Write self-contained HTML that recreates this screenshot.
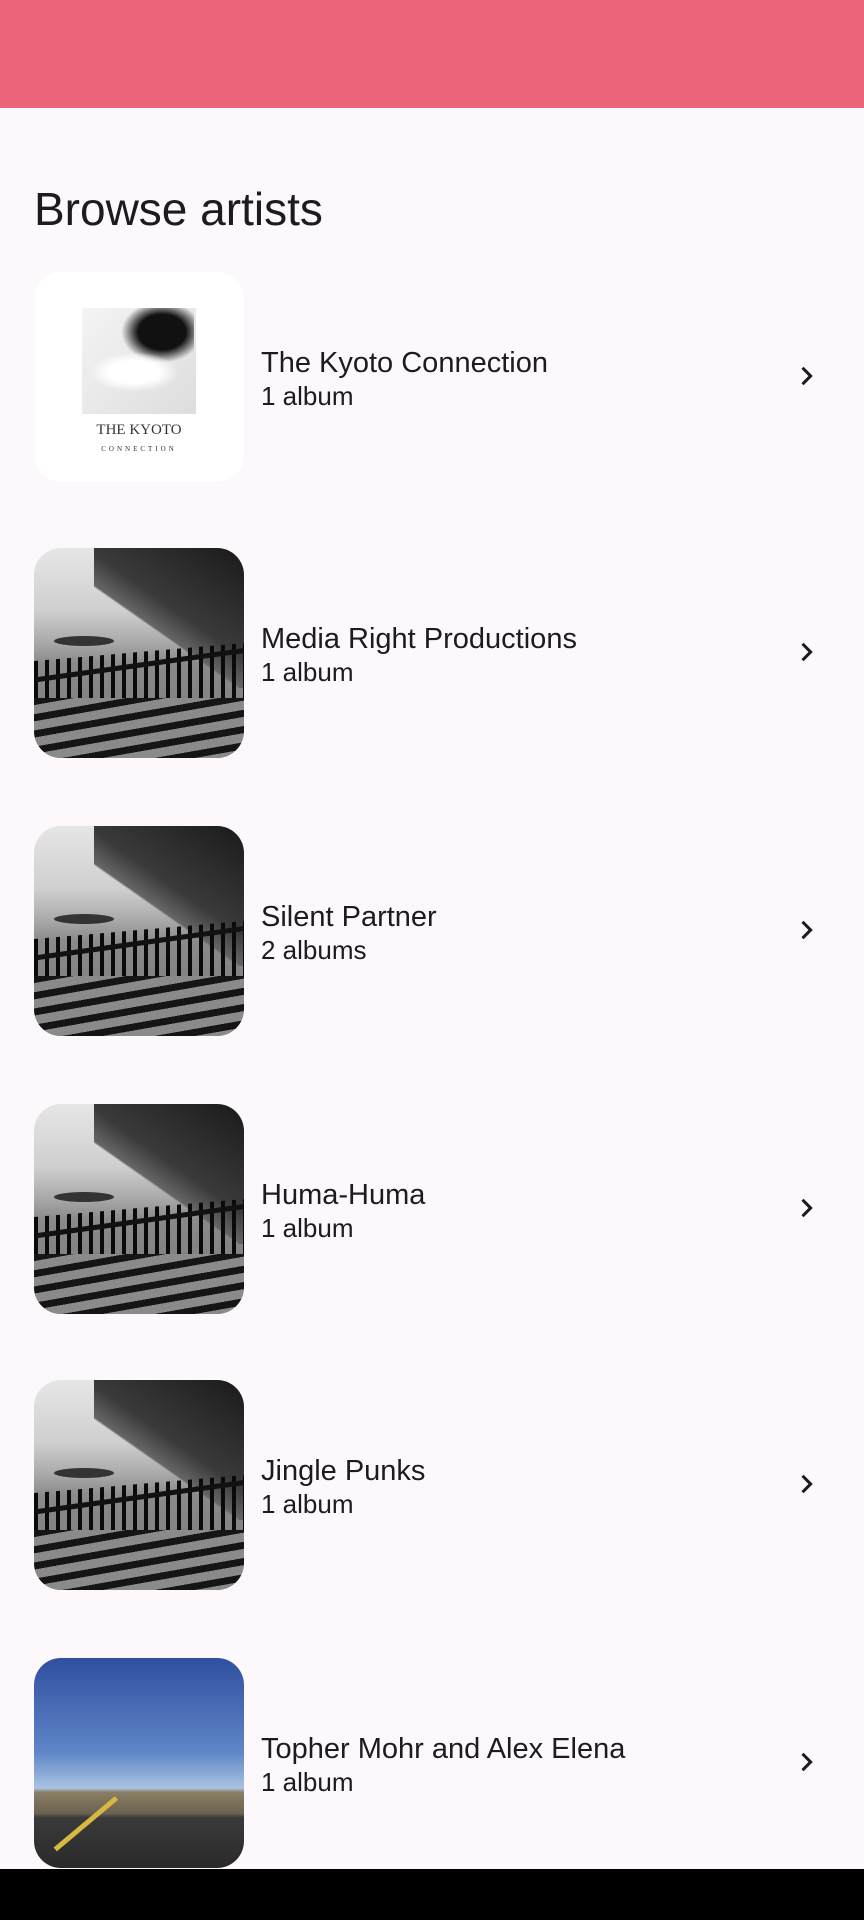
<!DOCTYPE html>
<html><head><meta charset="utf-8"><style>
*{margin:0;padding:0;box-sizing:border-box}
body{width:864px;height:1920px;background:#fdf8fc;font-family:"Liberation Sans",Roboto,sans-serif;position:relative;overflow:hidden;color:#1c1b1f}
.top{position:absolute;left:0;top:0;width:864px;height:108px;background:#ec6479}
h1{position:absolute;left:34px;top:182px;font-size:46px;font-weight:400;color:#1c1b1f}
.row{position:absolute;left:0;width:864px;height:210px}
.img{position:absolute;left:34px;top:0;width:210px;height:210px;border-radius:27px;overflow:hidden}
.coast{background:linear-gradient(180deg,#e6e6e6 0%,#cfcfcf 30%,#a9a9a9 45%,#8a8a8a 55%,#777 100%)}
.coast .hill{position:absolute;left:60px;top:0;width:150px;height:140px;background:linear-gradient(215deg,#1a1a1a 0%,#3a3a3a 45%,#666 58%,transparent 59%)}
.coast .rock{position:absolute;left:20px;top:88px;width:60px;height:10px;background:#333;border-radius:50%}
.coast .fence{position:absolute;left:0;top:95px;width:210px;height:60px;background:repeating-linear-gradient(90deg,#0a0a0a 0 4px,transparent 4px 11px);clip-path:polygon(0 30%,100% 0,100% 100%,0 100%)}
.coast .rail{position:absolute;left:0;top:100px;width:210px;height:5px;background:#111;transform:rotate(-8deg);transform-origin:right}
.coast .grnd{position:absolute;left:0;top:150px;width:210px;height:60px;background:repeating-linear-gradient(170deg,#151515 0 7px,#8a8a8a 7px 16px)}
.kyoto{background:#fff}
.kyoto .p{position:absolute;left:48px;top:36px;width:114px;height:106px;background:linear-gradient(135deg,#f4f4f4,#ddd)}
.kyoto .h{position:absolute;left:80px;top:36px;width:80px;height:60px;background:radial-gradient(ellipse at 60% 40%,#111 0 35%,transparent 60%)}
.kyoto .b{position:absolute;left:55px;top:80px;width:90px;height:40px;background:radial-gradient(ellipse,#fff 0 40%,transparent 70%)}
.kyoto .t{position:absolute;left:0;width:210px;top:150px;text-align:center;font-family:"Liberation Serif",serif;font-size:15px;color:#333}
.road{background:linear-gradient(180deg,#2f4fa0 0%,#5f86c8 45%,#a9c3e0 62%,#8a7e64 64%,#6b6250 74%,#3a3a3a 76%,#2a2a2a 100%)}
.road .y{position:absolute;left:80px;top:140px;width:5px;height:80px;background:#d8b840;transform:rotate(50deg);transform-origin:top}
.name{position:absolute;left:261px;top:75px;font-size:29px}
.sub{position:absolute;left:261px;top:109px;font-size:26px}
.chev{position:absolute;left:792px;top:90px}
.bot{position:absolute;left:0;top:1869px;width:864px;height:51px;background:#000}
</style></head><body>
<div class="top"></div>
<h1>Browse artists</h1>

<div class="row" style="top:272px"><div class="img kyoto"><div class="p"></div><div class="h"></div><div class="b"></div><div class="t">THE KYOTO<br><span style="font-size:7px;letter-spacing:3px">CONNECTION</span></div></div>
<div class="name">The Kyoto Connection</div><div class="sub">1 album</div>
<svg class="chev" width="28" height="28" viewBox="0 0 24 24"><path d="M9 5l7 7-7 7" fill="none" stroke="#1c1b1f" stroke-width="2.6"/></svg></div>

<div class="row" style="top:548px"><div class="img coast"><div class="hill"></div><div class="rock"></div><div class="fence"></div><div class="rail"></div><div class="grnd"></div></div>
<div class="name">Media Right Productions</div><div class="sub">1 album</div>
<svg class="chev" width="28" height="28" viewBox="0 0 24 24"><path d="M9 5l7 7-7 7" fill="none" stroke="#1c1b1f" stroke-width="2.6"/></svg></div>

<div class="row" style="top:826px"><div class="img coast"><div class="hill"></div><div class="rock"></div><div class="fence"></div><div class="rail"></div><div class="grnd"></div></div>
<div class="name">Silent Partner</div><div class="sub">2 albums</div>
<svg class="chev" width="28" height="28" viewBox="0 0 24 24"><path d="M9 5l7 7-7 7" fill="none" stroke="#1c1b1f" stroke-width="2.6"/></svg></div>

<div class="row" style="top:1104px"><div class="img coast"><div class="hill"></div><div class="rock"></div><div class="fence"></div><div class="rail"></div><div class="grnd"></div></div>
<div class="name">Huma-Huma</div><div class="sub">1 album</div>
<svg class="chev" width="28" height="28" viewBox="0 0 24 24"><path d="M9 5l7 7-7 7" fill="none" stroke="#1c1b1f" stroke-width="2.6"/></svg></div>

<div class="row" style="top:1380px"><div class="img coast"><div class="hill"></div><div class="rock"></div><div class="fence"></div><div class="rail"></div><div class="grnd"></div></div>
<div class="name">Jingle Punks</div><div class="sub">1 album</div>
<svg class="chev" width="28" height="28" viewBox="0 0 24 24"><path d="M9 5l7 7-7 7" fill="none" stroke="#1c1b1f" stroke-width="2.6"/></svg></div>

<div class="row" style="top:1658px"><div class="img road"><div class="y"></div></div>
<div class="name">Topher Mohr and Alex Elena</div><div class="sub">1 album</div>
<svg class="chev" width="28" height="28" viewBox="0 0 24 24"><path d="M9 5l7 7-7 7" fill="none" stroke="#1c1b1f" stroke-width="2.6"/></svg></div>

<div class="bot"></div>
</body></html>
